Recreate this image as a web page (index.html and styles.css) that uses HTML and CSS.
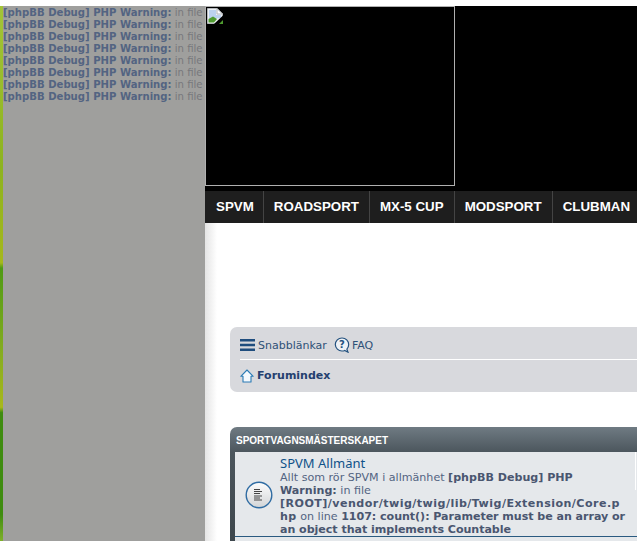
FILE: index.html
```html
<!DOCTYPE html>
<html lang="sv">
<head>
<meta charset="utf-8">
<title>SPVM Forum</title>
<link rel="stylesheet" href="styles.css">
</head>
<body>
<div class="page">
  <div class="edge"></div>
  <aside class="sidebar">
    <p class="debug"><b>[phpBB Debug] PHP Warning:</b> in file</p>
    <p class="debug"><b>[phpBB Debug] PHP Warning:</b> in file</p>
    <p class="debug"><b>[phpBB Debug] PHP Warning:</b> in file</p>
    <p class="debug"><b>[phpBB Debug] PHP Warning:</b> in file</p>
    <p class="debug"><b>[phpBB Debug] PHP Warning:</b> in file</p>
    <p class="debug"><b>[phpBB Debug] PHP Warning:</b> in file</p>
    <p class="debug"><b>[phpBB Debug] PHP Warning:</b> in file</p>
    <p class="debug"><b>[phpBB Debug] PHP Warning:</b> in file</p>
  </aside>
  <main class="main">
    <header class="hero">
      <div class="logo">
        <svg class="broken" width="16" height="16" viewBox="0 0 16 16">
          <path d="M0.500 0.500H10L15.500 6V15.500H0.500Z" fill="#eef1f4" stroke="#b4b8bc"/>
          <path d="M10 0.500V6H15.500Z" fill="#fff" stroke="#b4b8bc"/>
          <path d="M2 2H9V7H14V10L2 11Z" fill="#bcd2ee"/>
          <path d="M1.500 14.500V11L6 8.500L10 11L7 14.500Z" fill="#4f9b2f"/>
          <path d="M7 16L16 7.500V16Z" fill="#000"/>
          <path d="M12 16L16 12V16Z" fill="#4f9b2f"/>
        </svg>
      </div>
    </header>
    <nav class="nav">
      <a class="nav-item">SPVM</a>
      <a class="nav-item">ROADSPORT</a>
      <a class="nav-item">MX-5 CUP</a>
      <a class="nav-item">MODSPORT</a>
      <a class="nav-item">CLUBMAN</a>
    </nav>
    <div class="content">
      <section class="crumbs">
        <div class="crumb-row top">
          <svg class="ico-menu" width="15" height="12" viewBox="0 0 15 12"><path d="M0 0h15v2.500H0zM0 4.800h15v2.500H0zM0 9.500h15V12H0z" fill="#1f4d7e"/></svg>
          <span class="link">Snabblänkar</span>
          <svg class="ico-faq" width="16" height="16" viewBox="0 0 16 16"><path d="M8 1a6.600 6.600 0 0 0-6.700 6.600A6.600 6.600 0 0 0 8 14c1 0 2-.2 2.700-.6l3.300 1.800-1.100-3.100a6.500 6.500 0 0 0 1.800-4.500A6.600 6.600 0 0 0 8 1Z" fill="#eef2f6" stroke="#24527f" stroke-width="1.200"/><text x="8" y="11.300" class="faq-mark">?</text></svg>
          <span class="link">FAQ</span>
        </div>
        <div class="crumb-row bottom">
          <svg class="ico-home" width="14" height="14" viewBox="0 0 14 14"><path d="M7 1L.8 7.300H3V13H11V7.300H13.200Z" fill="#f4f9fd" stroke="#2a7bb5" stroke-width="1.100" stroke-linejoin="round"/></svg>
          <b class="link strong">Forumindex</b>
        </div>
      </section>
      <section class="forabg">
        <h2 class="cat-title">SPORTVAGNSMÄSTERSKAPET</h2>
        <div class="forum-row">
          <svg class="ico-forum" width="28" height="28" viewBox="0 0 28 28">
            <defs><linearGradient id="disc" x1="0" y1="0" x2="0" y2="1"><stop offset="0" stop-color="#fdfdfd"/><stop offset="1" stop-color="#d2d4d6"/></linearGradient></defs>
            <circle cx="14" cy="14" r="12.800" fill="url(#disc)" stroke="#2f6ca3" stroke-width="1.400"/>
            <path d="M9 8.500h6M9 10.500h8M9 12.500h6M9 15h8M9 17h6M9 19h8" stroke="#444" stroke-width="1.100"/>
          </svg>
          <div class="forum-text">
            <a class="forum-title">SPVM Allmänt</a>
            <p class="forum-desc">Allt som rör SPVM i allmänhet <b>[phpBB Debug] PHP Warning:</b> in file <b class="path">[ROOT]/vendor/twig/twig/lib/Twig/Extension/Core.php</b> on line <b class="msg">1107: count(): Parameter must be an array or an object that implements Countable</b></p>
          </div>
          <div class="forum-stat"></div>
        </div>
        <div class="forum-row"></div>
      </section>
    </div>
  </main>
</div>
</body>
</html>
```
FILE: styles.css
```css
html, body {
  margin: 0;
  padding: 0;
  background: #fff;
  overflow: hidden;
}
.page {
  display: flex;
  width: 637px;
  height: 541px;
  overflow: hidden;
  font-family: "DejaVu Sans", sans-serif;
}
.edge {
  flex: 0 0 3px;
  margin-top: 6px;
  background: linear-gradient(180deg, #a3c437 0%, #8db31f 30%, #a5b81c 48%, #4f9a14 49%, #86ad20 65%, #a8b81a 75%, #3f8c10 76%, #3f8c10 95%, #7fb02a 100%);
}
.sidebar {
  flex: 0 0 202px;
  min-width: 0;
  box-sizing: border-box;
  margin-top: 6px;
  padding-top: 1px;
  background: #9f9f9d;
  overflow: hidden;
}
.debug {
  margin: 0;
  height: 12px;
  font-size: 10.100px;
  line-height: 12px;
  white-space: nowrap;
  color: #77787c;
}
.debug b {
  color: #536482;
}
.main {
  flex: 0 0 432px;
  min-width: 0;
  background: #fff;
}
.hero {
  height: 185px;
  margin-top: 6px;
  background: #000;
}
.logo {
  box-sizing: border-box;
  width: 250px;
  height: 180px;
  border: 1px solid #b0b0b0;
  padding: 1px;
}
.broken {
  display: block;
}
.nav {
  display: flex;
  height: 32px;
  background: #1e1e1e;
}
.nav-item {
  flex: none;
  padding: 0 10px;
  border-right: 1px solid #444;
  font: bold 13.330px/32px "Liberation Sans", Arial, sans-serif;
  color: #fff;
  white-space: nowrap;
}
.nav-item:first-child {
  padding: 0 9px 0 11px;
}
.nav-item:last-child {
  border-right: 0;
}
.content {
  padding: 104px 0 0 25px;
  width: 600px;
  background: linear-gradient(90deg, #e4e4e4 0, #fff 12px);
  height: 318px;
}
.crumbs {
  height: 65px;
  border-radius: 7px;
  background: #d8d9dd;
  box-sizing: border-box;
  padding: 0 10px;
}
.crumb-row {
  display: flex;
  align-items: center;
}
.crumb-row.top {
  height: 28px;
  padding-top: 4px;
  border-bottom: 1px solid #fff;
}
.crumb-row.bottom {
  height: 31px;
}
.link {
  font-size: 11px;
  color: #2f5177;
  white-space: nowrap;
}
.link.strong {
  color: #24406f;
  font-weight: bold;
}
.ico-menu {
  margin-right: 3px;
}
.ico-faq {
  margin: 0 2px 0 7px;
}
.faq-mark {
  font: bold 10px "DejaVu Sans", sans-serif;
  fill: #24527f;
  text-anchor: middle;
}
.ico-home {
  margin-right: 3px;
}
.forabg {
  margin-top: 35px;
  padding: 0 0 4px 5px;
  border-radius: 7px 7px 0 0;
  background: linear-gradient(180deg, #6f7b83 0, #4c565d 25px, #3e474d 110px);
}
.cat-title {
  margin: 0 0 0 1px;
  height: 25px;
  font: bold 10px/27px "Liberation Sans", Arial, sans-serif;
  color: #fff;
}
.forum-row {
  display: flex;
  align-items: center;
  height: 85px;
  box-sizing: border-box;
  padding-left: 10px;
  background: #e5e8eb;
  border-bottom: 1px solid #2a5a80;
}
.ico-forum {
  flex: none;
  margin: 1px 7px 0 0;
}
.forum-text {
  flex: 0 0 348px;
  padding-top: 4px;
}
.forum-title {
  display: block;
  font: 13px/15px "Noto Sans", sans-serif;
  color: #105289;
}
.forum-desc {
  margin: 0;
  font-size: 11.100px;
  line-height: 13px;
  color: #536482;
  overflow-wrap: anywhere;
}
.forum-desc b {
  color: #4a5670;
}
.forum-desc .path {
  letter-spacing: 0.450px;
}
.forum-desc .msg {
  letter-spacing: -0.050px;
}
.forum-stat {
  align-self: flex-start;
  flex: none;
  width: 2px;
  height: 38px;
  margin-left: 7px;
  border-left: 1px solid #fff;
}
```
